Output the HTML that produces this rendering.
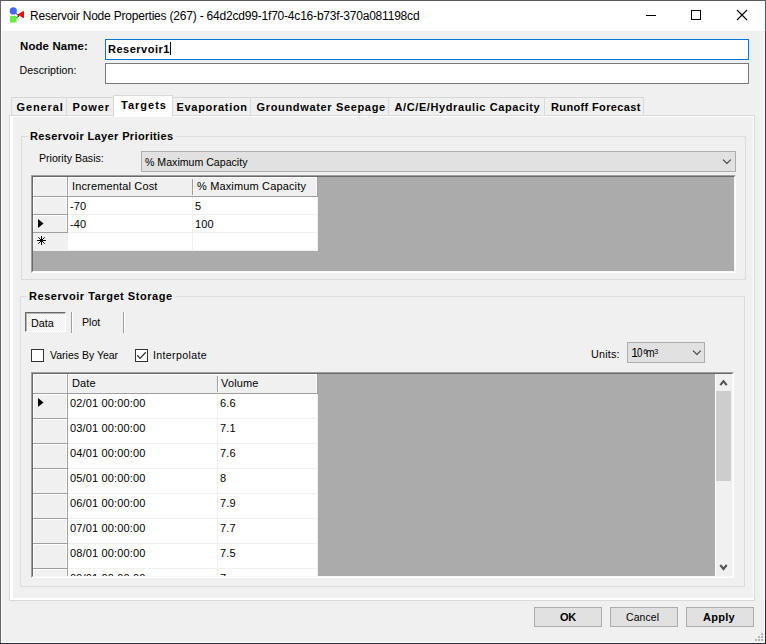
<!DOCTYPE html>
<html><head><meta charset="utf-8">
<style>
*{box-sizing:border-box;margin:0;padding:0}
html,body{width:766px;height:644px;overflow:hidden;background:#f0f0f0}
body{position:relative;font-family:"Liberation Sans",sans-serif;color:#000}
.a{position:absolute}
.t{position:absolute;white-space:pre;line-height:1}
.b{font-weight:bold}
.hl{position:absolute;height:1px}
.vl{position:absolute;width:1px}
</style></head><body>
<!-- window frame -->
<div class="a" style="left:0;top:0;width:766px;height:644px;background:#f0f0f0"></div>
<div class="a" style="left:0;top:0;width:765px;height:1px;background:#595959"></div>
<div class="a" style="left:0;top:0;width:1px;height:644px;background:#666"></div>
<div class="a" style="left:765px;top:0;width:1px;height:644px;background:linear-gradient(#2f6f68 0,#2f6f68 31px,#433460 31px,#433460 600px,#23232e 600px)"></div>
<div class="a" style="left:0;top:643px;width:766px;height:1px;background:#2e2e3a"></div>
<!-- title bar -->
<div class="a" style="left:1px;top:1px;width:764px;height:30px;background:#fff"></div>
<svg class="a" style="left:8px;top:5px" width="20" height="20" viewBox="0 0 20 20">
  <line x1="5" y1="6" x2="11" y2="11" stroke="#222" stroke-width="1"/>
  <line x1="5" y1="15" x2="11" y2="11" stroke="#222" stroke-width="1"/>
  <circle cx="5.3" cy="5.9" r="3.6" fill="#4466ff"/>
  <rect x="2" y="11" width="6.5" height="6.5" rx="0.8" fill="#66ee3a"/>
  <path d="M9.1 9.6 L16 5.8 L16 13.2 Z" fill="#e41212"/>
</svg>
<div class="t" style="left:30px;top:10px;font-size:12px;letter-spacing:-0.2px;color:#000">Reservoir Node Properties (267) - 64d2cd99-1f70-4c16-b73f-370a081198cd</div>
<!-- caption buttons -->
<div class="a" style="left:646px;top:15px;width:10px;height:1px;background:#000"></div>
<div class="a" style="left:691px;top:10px;width:10px;height:10px;border:1px solid #000"></div>
<svg class="a" style="left:736px;top:9px" width="12" height="12" viewBox="0 0 12 12"><path d="M1 1 L11 11 M11 1 L1 11" stroke="#000" stroke-width="1.1"/></svg>

<!-- node name / description -->
<div class="t b" style="left:20px;top:41px;font-size:11.4px;letter-spacing:0.15px">Node Name:</div>
<div class="a" style="left:105px;top:39px;width:644px;height:21px;background:#fff;border:1px solid #0078d7"></div>
<div class="t b" style="left:108px;top:44px;font-size:11px;letter-spacing:0.5px">Reservoir1</div>
<div class="a" style="left:170px;top:42px;width:1px;height:13px;background:#000"></div>
<div class="t" style="left:19.5px;top:65px;font-size:10.6px;letter-spacing:0.1px">Description:</div>
<div class="a" style="left:105px;top:63px;width:644px;height:21px;background:#fff;border:1px solid #7a7a7a"></div>

<!-- tab strip -->
<div class="a" style="left:11px;top:97px;width:633px;height:19px;background:#f0f0f0;border:1px solid #d9d9d9;border-bottom:none"></div>
<div class="vl" style="left:66px;top:97px;height:19px;background:#d9d9d9"></div>
<div class="vl" style="left:113px;top:97px;height:19px;background:#d9d9d9"></div>
<div class="vl" style="left:250px;top:97px;height:19px;background:#d9d9d9"></div>
<div class="vl" style="left:388px;top:97px;height:19px;background:#d9d9d9"></div>
<div class="vl" style="left:544px;top:97px;height:19px;background:#d9d9d9"></div>
<!-- page -->
<div class="a" style="left:9px;top:115px;width:746px;height:486px;background:#fff;border:1px solid #d9d9d9"></div>
<div class="a" style="left:13px;top:117px;width:740px;height:481px;background:#f0f0f0"></div>
<!-- active tab -->
<div class="a" style="left:113px;top:95px;width:60px;height:22px;background:#fff;border:1px solid #d9d9d9;border-bottom:none"></div>
<div class="t b" style="left:16.5px;top:102px;font-size:11px;letter-spacing:0.9px">General</div>
<div class="t b" style="left:72.5px;top:102px;font-size:11px;letter-spacing:0.9px">Power</div>
<div class="t b" style="left:121px;top:100px;font-size:11px;letter-spacing:1.0px">Targets</div>
<div class="t b" style="left:176.5px;top:102px;font-size:11px;letter-spacing:0.7px">Evaporation</div>
<div class="t b" style="left:256.5px;top:102px;font-size:11px;letter-spacing:0.66px">Groundwater Seepage</div>
<div class="t b" style="left:394.5px;top:102px;font-size:11px;letter-spacing:0.6px">A/C/E/Hydraulic Capacity</div>
<div class="t b" style="left:551px;top:102px;font-size:11px;letter-spacing:0.36px">Runoff Forecast</div>

<!-- group 1 -->
<div class="a" style="left:21px;top:136px;width:725px;height:144px;border:1px solid #dcdcdc"></div>
<div class="a" style="left:28px;top:130px;width:148px;height:12px;background:#f0f0f0"></div>
<div class="t b" style="left:30px;top:131px;font-size:11px;letter-spacing:0.37px">Reservoir Layer Priorities</div>
<div class="t" style="left:39px;top:153px;font-size:10.6px">Priority Basis:</div>
<div class="a" style="left:141px;top:151px;width:595px;height:21px;background:#e1e1e1;border:1px solid #adadad"></div>
<div class="t" style="left:145px;top:157px;font-size:10.6px">% Maximum Capacity</div>
<svg class="a" style="left:722px;top:158px" width="10" height="7" viewBox="0 0 10 7"><path d="M1 1.6 L4.9 5.4 L8.8 1.6" fill="none" stroke="#444" stroke-width="1.15"/></svg>

<!-- grid 1 -->
<div class="a" style="left:31px;top:175px;width:705px;height:98px;background:#ababab;border-top:1px solid #a0a0a0;border-left:1px solid #a0a0a0;border-right:1px solid #fff;border-bottom:1px solid #fff"></div>
<div class="a" style="left:32px;top:176px;width:703px;height:96px;border-top:1px solid #696969;border-left:1px solid #696969;border-right:1px solid #f8f8f8;border-bottom:1px solid #f8f8f8"></div>

<!-- grid1 cells -->
<div class="a" style="left:33px;top:177px;width:35px;height:20px;background:#f0f0f0;border-right:1px solid #a0a0a0;border-bottom:1px solid #a0a0a0;box-shadow:inset 1px 1px 0 #fff,inset -1px 0 0 #fbfbfb"></div>
<div class="a" style="left:68px;top:177px;width:125px;height:20px;background:#f0f0f0;border-bottom:1px solid #a0a0a0;box-shadow:inset 1px 1px 0 #fff"></div>
<div class="a" style="left:192px;top:179px;width:1px;height:16px;background:#a0a0a0"></div>
<div class="a" style="left:193px;top:177px;width:125px;height:20px;background:#f0f0f0;border-right:1px solid #a0a0a0;border-bottom:1px solid #a0a0a0;box-shadow:inset 1px 1px 0 #fff,inset -1px 0 0 #fbfbfb"></div>
<div class="t" style="left:72px;top:181.0px;font-size:11px;letter-spacing:0.15px">Incremental Cost</div>
<div class="t" style="left:197px;top:181.0px;font-size:11px;letter-spacing:0.15px">% Maximum Capacity</div>
<div class="a" style="left:33px;top:197px;width:35px;height:18px;background:#f0f0f0;border-right:1px solid #a0a0a0;border-bottom:1px solid #a0a0a0;box-shadow:inset 1px 1px 0 #fff,inset -1px 0 0 #fbfbfb"></div>
<div class="a" style="left:68px;top:197px;width:125px;height:18px;background:#fff;border-right:1px solid #f0f0f0;border-bottom:1px solid #f0f0f0"></div>
<div class="a" style="left:193px;top:197px;width:125px;height:18px;background:#fff;border-right:1px solid #f0f0f0;border-bottom:1px solid #f0f0f0"></div>
<div class="t" style="left:70px;top:201.0px;font-size:11px;letter-spacing:0.15px">-70</div>
<div class="t" style="left:195px;top:201.0px;font-size:11px;letter-spacing:0.15px">5</div>
<div class="a" style="left:33px;top:215px;width:35px;height:18px;background:#f0f0f0;border-right:1px solid #a0a0a0;border-bottom:1px solid #a0a0a0;box-shadow:inset 1px 1px 0 #fff,inset -1px 0 0 #fbfbfb"></div>
<div class="a" style="left:68px;top:215px;width:125px;height:18px;background:#fff;border-right:1px solid #f0f0f0;border-bottom:1px solid #f0f0f0"></div>
<div class="a" style="left:193px;top:215px;width:125px;height:18px;background:#fff;border-right:1px solid #f0f0f0;border-bottom:1px solid #f0f0f0"></div>
<div class="t" style="left:70px;top:219.0px;font-size:11px;letter-spacing:0.15px">-40</div>
<div class="t" style="left:195px;top:219.0px;font-size:11px;letter-spacing:0.15px">100</div>
<div class="a" style="left:33px;top:233px;width:35px;height:18px;background:#f0f0f0"></div>
<div class="a" style="left:68px;top:233px;width:125px;height:18px;background:#fff;border-right:1px solid #f0f0f0;border-bottom:1px solid #f0f0f0"></div>
<div class="a" style="left:193px;top:233px;width:125px;height:18px;background:#fff;border-right:1px solid #f0f0f0;border-bottom:1px solid #f0f0f0"></div>
<svg class="a" style="left:36px;top:217px" width="10" height="13" viewBox="0 0 10 13"><path d="M2 2 L7.5 6.5 L2 11 Z" fill="#000"/></svg>
<svg class="a" style="left:36px;top:235px" width="11" height="11" viewBox="0 0 11 11"><path d="M5.5 1 V10 M1 5.5 H10 M2.3 2.3 L8.7 8.7 M8.7 2.3 L2.3 8.7" stroke="#000" stroke-width="1"/></svg>
<!-- group 2 -->
<div class="a" style="left:20px;top:296px;width:725px;height:291px;border:1px solid #dcdcdc"></div>
<div class="a" style="left:27px;top:290px;width:149px;height:12px;background:#f0f0f0"></div>
<div class="t b" style="left:29px;top:291px;font-size:11px;letter-spacing:0.54px">Reservoir Target Storage</div>

<!-- data / plot -->
<div class="a" style="left:25px;top:312px;width:41px;height:20px;background:repeating-conic-gradient(#fff 0 25%,#ececec 0 50%) 0 0/2px 2px;border-top:1px solid #6a6a6a;border-left:1px solid #6a6a6a;border-right:1px solid #fff;border-bottom:1px solid #fff;box-shadow:inset 1px 1px 0 #b4b4b4"></div>
<div class="t" style="left:31px;top:318px;font-size:10.8px">Data</div>
<div class="vl" style="left:71px;top:312px;height:21px;background:#a0a0a0;box-shadow:1px 0 0 #fff"></div>
<div class="t" style="left:82px;top:317px;font-size:10.6px">Plot</div>
<div class="vl" style="left:123px;top:312px;height:21px;background:#a0a0a0;box-shadow:1px 0 0 #fff"></div>

<!-- checkboxes -->
<div class="a" style="left:31px;top:349px;width:13px;height:13px;background:#fff;border:1px solid #333"></div>
<div class="t" style="left:50px;top:350px;font-size:10.5px">Varies By Year</div>
<div class="a" style="left:135px;top:349px;width:13px;height:13px;background:#fff;border:1px solid #333"></div>
<svg class="a" style="left:135px;top:349px" width="13" height="13" viewBox="0 0 13 13"><path d="M2.3 6.3 L5 9.4 L10.8 3.3" fill="none" stroke="#333" stroke-width="1.3"/></svg>
<div class="t" style="left:153px;top:350px;font-size:10.6px;letter-spacing:0.35px">Interpolate</div>

<div class="t" style="left:591px;top:349px;font-size:10.8px;letter-spacing:0.2px">Units:</div>
<div class="a" style="left:627px;top:342px;width:78px;height:21px;background:#e1e1e1;border:1px solid #adadad"></div>
<div class="t" style="left:631.2px;top:347px;font-size:12.2px">1</div><div class="t" style="left:637.4px;top:347px;font-size:12.2px;transform:scaleX(0.8);transform-origin:0 0">0</div><div class="t" style="left:643.2px;top:347.6px;font-size:7.4px">6</div><div class="t" style="left:645.5px;top:347px;font-size:12.2px;transform:scaleX(0.85);transform-origin:0 0">m</div><div class="t" style="left:654.2px;top:347.5px;font-size:7.2px">3</div>
<svg class="a" style="left:692px;top:349px" width="10" height="7" viewBox="0 0 10 7"><path d="M1 1.6 L4.9 5.4 L8.8 1.6" fill="none" stroke="#444" stroke-width="1.15"/></svg>

<!-- grid 2 -->
<div class="a" style="left:31px;top:372px;width:703px;height:206px;background:#ababab;border-top:1px solid #a0a0a0;border-left:1px solid #a0a0a0;border-right:1px solid #fff;border-bottom:1px solid #fff"></div>
<div class="a" style="left:32px;top:373px;width:701px;height:204px;border-top:1px solid #696969;border-left:1px solid #696969;border-right:1px solid #f8f8f8;border-bottom:1px solid #f8f8f8"></div>

<div class="a" style="left:0;top:0;width:766px;height:576px;overflow:hidden">
<div class="a" style="left:33px;top:374px;width:35px;height:20px;background:#f0f0f0;border-right:1px solid #a0a0a0;border-bottom:1px solid #a0a0a0;box-shadow:inset 1px 1px 0 #fff,inset -1px 0 0 #fbfbfb"></div>
<div class="a" style="left:68px;top:374px;width:150px;height:20px;background:#f0f0f0;border-bottom:1px solid #a0a0a0;box-shadow:inset 1px 1px 0 #fff"></div>
<div class="a" style="left:217px;top:376px;width:1px;height:16px;background:#a0a0a0"></div>
<div class="a" style="left:218px;top:374px;width:100px;height:20px;background:#f0f0f0;border-right:1px solid #a0a0a0;border-bottom:1px solid #a0a0a0;box-shadow:inset 1px 1px 0 #fff,inset -1px 0 0 #fbfbfb"></div>
<div class="t" style="left:72px;top:378.0px;font-size:11px;letter-spacing:0.15px">Date</div>
<div class="t" style="left:221px;top:378.0px;font-size:11px;letter-spacing:0.15px">Volume</div>
<div class="a" style="left:33px;top:394px;width:35px;height:25px;background:#f0f0f0;border-right:1px solid #a0a0a0;border-bottom:1px solid #a0a0a0;box-shadow:inset 1px 1px 0 #fff,inset -1px 0 0 #fbfbfb"></div>
<div class="a" style="left:68px;top:394px;width:150px;height:25px;background:#fff;border-right:1px solid #f0f0f0;border-bottom:1px solid #f0f0f0"></div>
<div class="a" style="left:218px;top:394px;width:100px;height:25px;background:#fff;border-right:1px solid #f0f0f0;border-bottom:1px solid #f0f0f0"></div>
<div class="t" style="left:70px;top:398.0px;font-size:11px;letter-spacing:0.15px">02/01 00:00:00</div>
<div class="t" style="left:220px;top:398.0px;font-size:11px;letter-spacing:0.15px">6.6</div>
<div class="a" style="left:33px;top:419px;width:35px;height:25px;background:#f0f0f0;border-right:1px solid #a0a0a0;border-bottom:1px solid #a0a0a0;box-shadow:inset 1px 1px 0 #fff,inset -1px 0 0 #fbfbfb"></div>
<div class="a" style="left:68px;top:419px;width:150px;height:25px;background:#fff;border-right:1px solid #f0f0f0;border-bottom:1px solid #f0f0f0"></div>
<div class="a" style="left:218px;top:419px;width:100px;height:25px;background:#fff;border-right:1px solid #f0f0f0;border-bottom:1px solid #f0f0f0"></div>
<div class="t" style="left:70px;top:423.0px;font-size:11px;letter-spacing:0.15px">03/01 00:00:00</div>
<div class="t" style="left:220px;top:423.0px;font-size:11px;letter-spacing:0.15px">7.1</div>
<div class="a" style="left:33px;top:444px;width:35px;height:25px;background:#f0f0f0;border-right:1px solid #a0a0a0;border-bottom:1px solid #a0a0a0;box-shadow:inset 1px 1px 0 #fff,inset -1px 0 0 #fbfbfb"></div>
<div class="a" style="left:68px;top:444px;width:150px;height:25px;background:#fff;border-right:1px solid #f0f0f0;border-bottom:1px solid #f0f0f0"></div>
<div class="a" style="left:218px;top:444px;width:100px;height:25px;background:#fff;border-right:1px solid #f0f0f0;border-bottom:1px solid #f0f0f0"></div>
<div class="t" style="left:70px;top:448.0px;font-size:11px;letter-spacing:0.15px">04/01 00:00:00</div>
<div class="t" style="left:220px;top:448.0px;font-size:11px;letter-spacing:0.15px">7.6</div>
<div class="a" style="left:33px;top:469px;width:35px;height:25px;background:#f0f0f0;border-right:1px solid #a0a0a0;border-bottom:1px solid #a0a0a0;box-shadow:inset 1px 1px 0 #fff,inset -1px 0 0 #fbfbfb"></div>
<div class="a" style="left:68px;top:469px;width:150px;height:25px;background:#fff;border-right:1px solid #f0f0f0;border-bottom:1px solid #f0f0f0"></div>
<div class="a" style="left:218px;top:469px;width:100px;height:25px;background:#fff;border-right:1px solid #f0f0f0;border-bottom:1px solid #f0f0f0"></div>
<div class="t" style="left:70px;top:473.0px;font-size:11px;letter-spacing:0.15px">05/01 00:00:00</div>
<div class="t" style="left:220px;top:473.0px;font-size:11px;letter-spacing:0.15px">8</div>
<div class="a" style="left:33px;top:494px;width:35px;height:25px;background:#f0f0f0;border-right:1px solid #a0a0a0;border-bottom:1px solid #a0a0a0;box-shadow:inset 1px 1px 0 #fff,inset -1px 0 0 #fbfbfb"></div>
<div class="a" style="left:68px;top:494px;width:150px;height:25px;background:#fff;border-right:1px solid #f0f0f0;border-bottom:1px solid #f0f0f0"></div>
<div class="a" style="left:218px;top:494px;width:100px;height:25px;background:#fff;border-right:1px solid #f0f0f0;border-bottom:1px solid #f0f0f0"></div>
<div class="t" style="left:70px;top:498.0px;font-size:11px;letter-spacing:0.15px">06/01 00:00:00</div>
<div class="t" style="left:220px;top:498.0px;font-size:11px;letter-spacing:0.15px">7.9</div>
<div class="a" style="left:33px;top:519px;width:35px;height:25px;background:#f0f0f0;border-right:1px solid #a0a0a0;border-bottom:1px solid #a0a0a0;box-shadow:inset 1px 1px 0 #fff,inset -1px 0 0 #fbfbfb"></div>
<div class="a" style="left:68px;top:519px;width:150px;height:25px;background:#fff;border-right:1px solid #f0f0f0;border-bottom:1px solid #f0f0f0"></div>
<div class="a" style="left:218px;top:519px;width:100px;height:25px;background:#fff;border-right:1px solid #f0f0f0;border-bottom:1px solid #f0f0f0"></div>
<div class="t" style="left:70px;top:523.0px;font-size:11px;letter-spacing:0.15px">07/01 00:00:00</div>
<div class="t" style="left:220px;top:523.0px;font-size:11px;letter-spacing:0.15px">7.7</div>
<div class="a" style="left:33px;top:544px;width:35px;height:25px;background:#f0f0f0;border-right:1px solid #a0a0a0;border-bottom:1px solid #a0a0a0;box-shadow:inset 1px 1px 0 #fff,inset -1px 0 0 #fbfbfb"></div>
<div class="a" style="left:68px;top:544px;width:150px;height:25px;background:#fff;border-right:1px solid #f0f0f0;border-bottom:1px solid #f0f0f0"></div>
<div class="a" style="left:218px;top:544px;width:100px;height:25px;background:#fff;border-right:1px solid #f0f0f0;border-bottom:1px solid #f0f0f0"></div>
<div class="t" style="left:70px;top:548.0px;font-size:11px;letter-spacing:0.15px">08/01 00:00:00</div>
<div class="t" style="left:220px;top:548.0px;font-size:11px;letter-spacing:0.15px">7.5</div>
<div class="a" style="left:33px;top:569px;width:35px;height:25px;background:#f0f0f0;border-right:1px solid #a0a0a0;border-bottom:1px solid #a0a0a0;box-shadow:inset 1px 1px 0 #fff,inset -1px 0 0 #fbfbfb"></div>
<div class="a" style="left:68px;top:569px;width:150px;height:25px;background:#fff;border-right:1px solid #f0f0f0;border-bottom:1px solid #f0f0f0"></div>
<div class="a" style="left:218px;top:569px;width:100px;height:25px;background:#fff;border-right:1px solid #f0f0f0;border-bottom:1px solid #f0f0f0"></div>
<div class="t" style="left:70px;top:573.0px;font-size:11px;letter-spacing:0.15px">09/01 00:00:00</div>
<div class="t" style="left:220px;top:573.0px;font-size:11px;letter-spacing:0.15px">7</div>
<svg class="a" style="left:36px;top:396px" width="10" height="13" viewBox="0 0 10 13"><path d="M2 2 L7.5 6.5 L2 11 Z" fill="#000"/></svg>
</div>
<!-- scrollbar -->
<div class="a" style="left:715px;top:374px;width:17px;height:202px;background:#f0f0f0;border-left:1px solid #fff"></div>
<div class="a" style="left:716px;top:391px;width:15px;height:90px;background:#cdcdcd"></div>
<svg class="a" style="left:716px;top:374px" width="16" height="17" viewBox="0 0 16 17"><path d="M4.3 11.2 L7.5 7.2 L10.7 11.2" fill="none" stroke="#555" stroke-width="2.1"/></svg>
<svg class="a" style="left:716px;top:559px" width="16" height="17" viewBox="0 0 16 17"><path d="M4.3 6 L7.5 10 L10.7 6" fill="none" stroke="#555" stroke-width="2.1"/></svg>
<!-- buttons -->
<div class="a" style="left:534px;top:607px;width:68px;height:20px;background:#e1e1e1;border:1px solid #adadad"></div>
<div class="t b" style="left:560px;top:612px;font-size:11px;letter-spacing:-0.2px">OK</div>
<div class="a" style="left:610px;top:607px;width:68px;height:20px;background:#e1e1e1;border:1px solid #adadad"></div>
<div class="t" style="left:626px;top:613px;font-size:10.4px;letter-spacing:0.15px">Cancel</div>
<div class="a" style="left:686px;top:607px;width:68px;height:20px;background:#e1e1e1;border:1px solid #adadad"></div>
<div class="t b" style="left:703px;top:612px;font-size:11px;letter-spacing:0.25px">Apply</div>
<!-- grip -->
<div class="a" style="left:1px;top:31px;width:1px;height:612px;background:#f8f8f8"></div>
<div class="a" style="left:761px;top:633px;width:2px;height:2px;background:#b4b4b4"></div>
<div class="a" style="left:758px;top:636px;width:2px;height:2px;background:#b4b4b4"></div>
<div class="a" style="left:761px;top:636px;width:2px;height:2px;background:#b4b4b4"></div>
<div class="a" style="left:755px;top:639px;width:2px;height:2px;background:#b4b4b4"></div>
<div class="a" style="left:758px;top:639px;width:2px;height:2px;background:#b4b4b4"></div>
<div class="a" style="left:761px;top:639px;width:2px;height:2px;background:#b4b4b4"></div>
<div class="a" style="left:764px;top:31px;width:1px;height:612px;background:#fafafa"></div>
<div class="a" style="left:1px;top:642px;width:764px;height:1px;background:#fafafa"></div>
</body></html>
